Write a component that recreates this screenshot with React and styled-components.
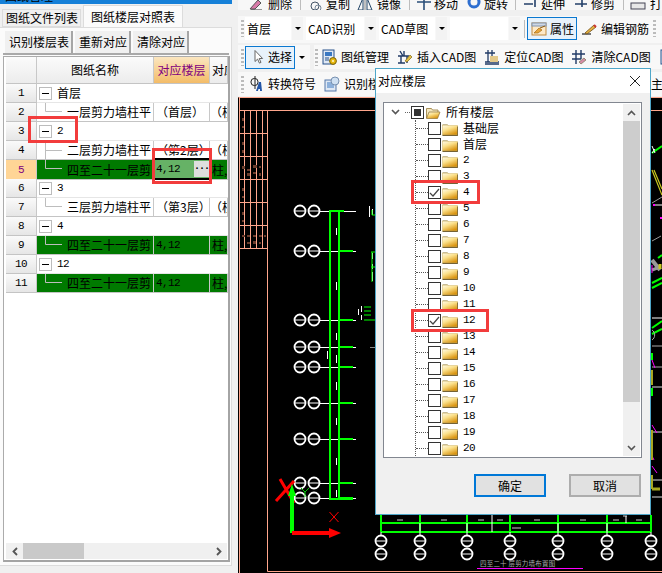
import React from 'react';
import styled, { createGlobalStyle } from 'styled-components';

const Global = createGlobalStyle`
  html, body { margin: 0; padding: 0; background: #f0f0f0; }
  * { box-sizing: border-box; }
`;

const CJK = `"Noto Sans CJK SC", "Liberation Sans", sans-serif`;
const MONO = `"Liberation Mono", monospace`;

const Page = styled.div`
  position: relative; width: 662px; height: 573px; overflow: hidden;
  display: flex; background: #f0f0f0; color: #000;
  font: 12px/16px ${CJK};
`;

/* ---------- left panel ---------- */
const LeftPanel = styled.div`
  width: 238px; flex: none; height: 573px; display: flex; flex-direction: column;
`;
const TitleStrip = styled.div`
  height: 4px; width: 232px; flex: none; background: #1580d8; overflow: hidden;
  display: flex; align-items: flex-end; padding-left: 5px; font-size: 12px;
`;
const TabBar = styled.div`
  height: 22px; flex: none; display: flex; align-items: flex-end; padding: 0 0 0 2px; gap: 2px; margin-top: 1px;
`;
const Tab = styled.div`
  height: ${p => (p.$active ? 22 : 18)}px;
  padding: 0 ${p => (p.$active ? 7 : 2)}px 0 ${p => (p.$active ? 7 : 3)}px;
  display: flex; align-items: center;
  background: ${p => (p.$active ? '#fbfbfb' : '#f0f0f0')};
  border: 1px solid #dcdcdc; border-bottom: ${p => (p.$active ? 'none' : '1px solid #dcdcdc')};
`;
const TabBody = styled.div`
  width: 232px; height: 539px; flex: none; background: #fbfbfb; border: 1px solid #dcdcdc; border-left: none;
  padding: 3px 0 0 3px; display: flex; flex-direction: column;
`;
const ButtonBar = styled.div`
  height: 24px; flex: none; display: flex; gap: 2px; border-bottom: 2px solid #a9a9a9; width: 226px; margin-bottom: 1px; padding-left: 2px;
`;
const BarButton = styled.div`
  height: 22px; padding: 0 2px 0 4px; display: flex; align-items: center; background: #f0f0f0;
  border-right: 2px solid #a6a6a6;
`;
const TableFrame = styled.div`
  width: 227px; flex: 1; min-height: 0; margin-bottom: 3px; display: flex; flex-direction: column; background: #fff;
  border: 1px solid #ababab; border-right: 2px solid #a4a4a4; border-bottom: 2px solid #a4a4a4; padding-left: 2px;
`;
const Grid = styled.div`
  flex: 1; min-height: 0; overflow: hidden;
`;
const Row = styled.div`
  display: grid; grid-template-columns: 31px 117px 56px 18px; height: ${p => p.$h || 19}px;
`;
const NumCell = styled.div`
  display: flex; align-items: center; justify-content: center;
  border-right: 1px solid #c8c8c8; border-bottom: 1px solid #c4c4c4;
  background: ${p => (p.$active ? '#ffd596' : 'linear-gradient(#fafafa, #e6e6e6)')};
  color: ${p => (p.$active ? '#800080' : '#000')};
  font: 11px/16px ${MONO}; letter-spacing: -0.6px;
`;
const HeadCell = styled.div`
  display: flex; align-items: center; justify-content: ${p => (p.$left ? 'flex-start' : 'center')};
  overflow: hidden; white-space: nowrap;
  border-right: 1px solid #c8c8c8; border-bottom: 1px solid #c4c4c4; padding-left: ${p => (p.$left ? 2 : 0)}px;
  background: ${p => (p.$accent ? 'linear-gradient(#fbe6c0, #f3bc68)' : 'linear-gradient(#fbfbfb, #ececec)')};
  color: ${p => (p.$accent ? '#800080' : '#000')};
`;
const GroupCell = styled.div`
  grid-column: 2 / 5; display: flex; align-items: center; gap: 5px; padding-left: 2px; border-bottom: 1px solid #e6e6e6; position: relative;
`;
const Expander = styled.span`
  width: 13px; height: 13px; flex: none; border: 1px solid #bcbcbc; background: #fff; display: flex; align-items: center; justify-content: center;
  &::before { content: ''; width: 7px; height: 1px; background: #000; }
`;
const Digits = styled.span`
  font: 11px/16px ${MONO}; letter-spacing: -0.6px;
`;
const Cell = styled.div`
  display: flex; align-items: center; overflow: hidden; white-space: nowrap;
  border-right: 1px solid #c8c8c8; border-bottom: 1px solid #c4c4c4;
  background: ${p => (p.$green ? '#007a00' : '#fff')};
  padding-left: ${p => p.$pad ?? 2}px;
`;
const EditCell = styled.div`
  margin-top: -2px; height: 22px; display: flex; align-items: center; justify-content: space-between; background: #66b266;
  border-top: 2px solid #000; border-bottom: 2px solid #000; padding-left: 2px; z-index: 1; position: relative; margin-right: 1px;
`;
const EllipsisBtn = styled.span`
  width: 15px; height: 16px; background: #dedede; font: bold 10px/12px ${MONO}; text-align: center; letter-spacing: -1px;
`;
const Connector = styled.svg`
  width: 30px; height: 19px; flex: none; display: block; overflow: visible;
`;
const HScroll = styled.div`
  height: 16px; flex: none; display: flex; align-items: stretch; background: #f0f0f0; width: 221px; margin-bottom: 1px;
`;
const ScrollArrow = styled.div`
  width: ${p => p.$w || 17}px; flex: none; display: flex; align-items: center; justify-content: center;
`;
const HThumb = styled.div`
  width: 61px; background: #c9c9c9;
`;
const HTrack = styled.div`
  flex: 1;
`;

/* ---------- right column ---------- */
const RightColumn = styled.div`
  width: 424px; flex: none; height: 573px; display: flex; flex-direction: column;
`;
const ClippedBar = styled.div`
  height: 10px; flex: none; overflow: hidden; background: #f7f7f7; display: flex; align-items: flex-start; padding-left: 10px; margin-bottom: 6px; white-space: nowrap;
  & > * { margin-top: -8px; }
`;
const ToolBar = styled.div`
  height: ${p => p.$h}px; flex: none; overflow: hidden; white-space: nowrap; display: flex; align-items: center; background: #f8f8f8;
  margin-bottom: ${p => p.$mb || 0}px; padding-bottom: ${p => p.$pb || 0}px;
`;
const Grip = styled.div`
  width: 3px; height: 17px; margin: 0 ${p => p.$mr ?? 1}px 0 ${p => p.$ml ?? 3}px; flex: none;
  background: repeating-linear-gradient(#bbb 0 2px, transparent 2px 4px);
`;
const Combo = styled.div`
  width: ${p => p.$w}px; height: 23px; flex: none; background: #fff; padding-left: 2px; display: flex; align-items: center;
`;
const ComboArrow = styled.div`
  width: 11px; height: 23px; margin-left: 1px; margin-right: 3px; flex: none; background: #f3f3f3; display: flex; align-items: center; justify-content: center;
  &::before { content: ''; border: 3px solid transparent; border-top: 3px solid #000; border-bottom: none; }
`;
const Sep = styled.div`
  width: 1px; height: ${p => p.$h || 18}px; background: #bdbdbd; flex: none; margin: 0 ${p => p.$mr ?? 2}px 0 ${p => p.$ml ?? 1}px;
`;
const ToolItem = styled.div`
  display: flex; align-items: center; flex: none; gap: ${p => p.$gap ?? 4}px; margin-right: ${p => p.$mr ?? 8}px; height: 23px;
  ${p => p.$sel && `border: 1px solid #0a78d0; background: #e8f2fb; padding: 0 2px 0 ${p.$pl ?? 3}px;`}
`;
const Icon = styled.svg`
  width: 16px; height: 16px; flex: none; display: block;
`;
const BareArrow = styled.div`
  width: 6px; margin: 0 5px 0 4px; flex: none; display: flex; align-items: center;
  &::before { content: ''; border: 3px solid transparent; border-top: 3px solid #000; border-bottom: none; }
`;
const GapBreak = styled.div`
  width: 4px; height: 100%; background: #f0f0f0; flex: none; margin-right: 1px;
`;
const Trailing = styled.span`
  margin-left: auto; margin-right: -13px; flex: none;
`;
const Canvas = styled.svg`
  display: block; width: 424px; height: 476px; background: #000; flex: none;
`;

/* ---------- dialog ---------- */
const Dialog = styled.div`
  position: absolute; left: 375px; top: 68px; width: 276px; height: 447px; background: #f0f0f0; border: 1px solid #4fa6c8; display: flex; flex-direction: column;
`;
const DialogTitle = styled.div`
  height: 24px; flex: none; background: #fff; display: flex; align-items: center; justify-content: space-between; padding: 0 9px 0 2px;
`;
const TreeBox = styled.div`
  width: 259px; height: 356px; margin: 9px 0 0 7px; flex: none; background: #fff; border: 1px solid #828790; display: flex; overflow: hidden;
`;
const TreeList = styled.div`
  flex: 1; padding-top: 1px; overflow: hidden;
`;
const RootRow = styled.div`
  height: 16px; display: flex; align-items: center; padding-left: 7px;
`;
const RootDots = styled.span`
  width: 5px; border-top: 1px dotted #666; margin: 0 1px 0 5px; flex: none;
`;
const Children = styled.div`
  margin-left: 31px; border-left: 1px dotted #555; height: 336px; overflow: hidden;
`;
const TreeRow = styled.div`
  height: 16px; display: flex; align-items: center;
  &::before { content: ''; width: 12px; border-top: 1px dotted #555; flex: none; }
`;
const CheckBox = styled.span`
  width: 13px; height: 13px; flex: none; background: #fff; border: 1px solid #333; display: flex; align-items: center; justify-content: center;
`;
const RootMark = styled.span`
  width: 7px; height: 7px; background: #333;
`;
const Folder = styled.svg`
  width: 16px; height: 15px; flex: none; margin: 0 5px 0 1px; display: block;
`;
const VScroll = styled.div`
  width: 17px; margin: 1px 1px 0 0; height: 352px; flex: none; background: #f0f0f0; display: flex; flex-direction: column;
`;
const VThumb = styled.div`
  height: 281px; background: #cdcdcd; flex: none;
`;
const VArrow = styled.div`
  height: 17px; flex: none; display: flex; align-items: center; justify-content: center;
`;
const DialogFooter = styled.div`
  display: flex; justify-content: flex-end; gap: 23px; padding: 16px 9px 0 0;
`;
const DialogButton = styled.div`
  width: 72px; height: 23px; display: flex; align-items: center; justify-content: center; background: #e1e1e1;
  border: 2px solid ${p => (p.$primary ? '#0078d7' : '#adadad')};
`;

/* ---------- red annotation boxes ---------- */
const Mark = styled.div`
  position: absolute; left: ${p => p.$x}px; top: ${p => p.$y}px; width: ${p => p.$w}px; height: ${p => p.$h}px;
  border: 3px solid #f23c3c; pointer-events: none; z-index: 5;
`;

/* ---------- drawings ---------- */
const ChevronDown = ({ c = '#555' }) => (
  <svg width="9" height="6" viewBox="0 0 9 6"><path d="M1 1l3.5 3.5L8 1" fill="none" stroke={c} strokeWidth="1.6" /></svg>
);
const ChevronUp = () => (
  <svg width="9" height="6" viewBox="0 0 9 6"><path d="M1 5l3.5-3.5L8 5" fill="none" stroke="#555" strokeWidth="1.6" /></svg>
);
const ChevronSide = ({ right }) => (
  <svg width="6" height="9" viewBox="0 0 6 9"><path d={right ? 'M1 1l3.5 3.5L1 8' : 'M5 1L1.5 4.5 5 8'} fill="none" stroke="#555" strokeWidth="1.8" /></svg>
);
const FolderIcon = ({ open }) => (
  <Folder viewBox="0 0 16 15">
    <defs>
      <linearGradient id="fg" x1="0" y1="0" x2=".6" y2="1">
        <stop offset="0" stopColor="#fffbe8" /><stop offset="0.45" stopColor="#fbe08a" /><stop offset="1" stopColor="#d9930f" />
      </linearGradient>
    </defs>
    {open ? (
      <>
        <path d="M1.5 13V3.5h5l1 1.500H13v2" fill="#f4e8c0" stroke="#a89058" />
        <path d="M1.500 13.500L4 7h11l-2.500 6.500z" fill="url(#fg)" stroke="#8c7030" strokeWidth=".7" />
      </>
    ) : (
      <>
        <path d="M.5 3.500h5l1 1.500" fill="none" stroke="#c8bc94" />
        <rect x=".5" y="4.500" width="15" height="9.500" fill="url(#fg)" stroke="#d8c078" strokeWidth=".6" />
        <path d="M.5 14.400h15.300V5.500" fill="none" stroke="#54410f" strokeWidth=".9" />
      </>
    )}
  </Folder>
);

const elbow = <path d="M8.500 -3V8.500H25" fill="none" stroke="#bdbdbd" />;
const tee = <path d="M8.500 -3V19M8.500 9.500H25" fill="none" stroke="#bdbdbd" />;

const Ic = {
  del: <><path d="M2 13L10 4l3 3-6 6z" fill="#d87aa8" stroke="#555" /><path d="M3 14h11" stroke="#333" /></>,
  copy: <><circle cx="9" cy="10" r="4" fill="none" stroke="#456" /><circle cx="12" cy="12" r="3" fill="none" stroke="#789" /></>,
  mirror: <><path d="M1 14L6 2v12zM15 14L10 2v12z" fill="none" stroke="#246" /><path d="M8 1v14" stroke="#888" /></>,
  move: <path d="M8 1v14M1 6h14" stroke="#2a4f7a" strokeWidth="1.6" fill="none" />,
  rot: <circle cx="8" cy="6" r="5" fill="none" stroke="#2f6fd0" strokeWidth="3" />,
  ext: <path d="M1 8h9M12 1v10" stroke="#24406a" strokeWidth="1.6" fill="none" />,
  trim: <path d="M2 8h12M9 1v10" stroke="#24406a" strokeWidth="1.6" fill="none" />,
  print: <><rect x="1" y="7" width="14" height="6" fill="#e8e8e8" stroke="#445" /></>,
  prop: <>
    <rect x="1" y="2" width="14" height="12" fill="#fde9c8" stroke="#c08a40" />
    <rect x="1" y="2" width="14" height="3" fill="#cfd8e4" stroke="#8094b0" />
    <path d="M3 12l5-5 3 2-4 3z" fill="#e9a63a" stroke="#a36b14" strokeWidth=".7" />
    <path d="M9 7l5-2" stroke="#8a5a10" />
  </>,
  rebar: <><path d="M1 13h9" stroke="#222" strokeWidth="1.2" /><path d="M4 12l9-8 2 2-9 7z" fill="#e6b341" stroke="#704d18" strokeWidth=".8" /><path d="M13 4l2 2" stroke="#c33" strokeWidth="2" /></>,
  manage: <><rect x="2" y="1" width="11" height="14" fill="#dfe8f4" stroke="#27508a" /><rect x="4" y="3" width="7" height="4" fill="#3a78c2" /><path d="M4 9h4M4 11h4" stroke="#27508a" /><circle cx="12" cy="12" r="3.400" fill="#e8b90f" stroke="#7b6208" /><circle cx="12" cy="12" r="1" fill="#fff8d0" /></>,
  insert: <><path d="M3 2l3 5M7 2v5M1 7h11M4 7v7M10 7v7M1 14h7" stroke="#203a66" strokeWidth="1.4" fill="none" /><path d="M8 12l5-6 2 2-5 5z" fill="#e3c045" stroke="#7c6519" strokeWidth=".7" /></>,
  locate: <><path d="M1 13h14M1 15h14M4 1v12M8 1v12M1 4h10" stroke="#203a66" strokeWidth="1.3" fill="none" /><rect x="6" y="7" width="8" height="6" fill="#e3c98a" /></>,
  clear: <><path d="M5 1v14M10 1v9M1 5h13M1 10h9" stroke="#203a66" strokeWidth="1.4" fill="none" /><path d="M8 13l5-4 2 2-5 4z" fill="#d78ca8" stroke="#775" strokeWidth=".7" /></>,
  symbol: <><circle cx="5.500" cy="6" r="3.600" fill="none" stroke="#222" /><path d="M6 0v13" stroke="#222" /><path d="M7 15l3-9h2l1 9h-2v-2h-1.500l-.6 2z" fill="#2356a8" /></>,
  detect: <><rect x="1" y="4" width="11" height="11" fill="#dfe8f4" stroke="#5577a8" /><path d="M3 7h7M3 9h7M3 11h7" stroke="#3a78c2" /><circle cx="11" cy="5" r="4" fill="#cfe0f2" stroke="#7790b0" /></>,
  cursor: <path d="M5 1.500v11l2.600-2.400 1.800 4 1.600-.7-1.800-3.900h3.400z" fill="#fff" stroke="#666" />,
};
const Glyph = ({ k }) => <Icon viewBox="0 0 16 16">{Ic[k]}</Icon>;

const Axis = ({ x, y }) => (
  <>
    <circle cx={x} cy={y} r="5.500" fill="none" stroke="#fff" strokeWidth="1.800" />
    <path d={`M${x - 6} ${y}h12`} stroke="#fff" />
  </>
);
const ys = [211, 251, 320, 347, 367, 403, 439, 483, 498];
const bx = [381, 420, 467, 510, 558, 607, 651];

const CadDrawing = () => (
  <Canvas viewBox="238 97 424 476">
    <g stroke="#ffa68c" fill="none">
      <path d="M238.500 97.500H662M239.500 97V573M239.500 110.500H662M267.500 110V571.500H662" />
      <path d="M244.500 110v138M250.500 110v138M256.500 110v138M262.500 110v138" />
      <path d="M240 133.500h27M240 156.500h27M240 179.500h27M240 202.500h27M240 225.500h27M240 248.500h27" />
    </g>
    <g fill="#6b3c2c">
      <rect x="242" y="118" width="2" height="3" /><rect x="242" y="126" width="2" height="2" />
      <rect x="242" y="142" width="2" height="3" /><rect x="242" y="150" width="2" height="3" />
      <rect x="242" y="166" width="3" height="3" /><rect x="247" y="169" width="3" height="2" /><rect x="253" y="165" width="4" height="3" /><rect x="259" y="166" width="2" height="2" /><rect x="247" y="173" width="3" height="3" /><rect x="253" y="172" width="3" height="2" /><rect x="259" y="173" width="2" height="3" />
      <rect x="242" y="188" width="2" height="3" /><rect x="242" y="196" width="2" height="2" />
      <rect x="242" y="212" width="2" height="3" /><rect x="242" y="220" width="2" height="2" />
      <rect x="242" y="235" width="3" height="2" /><rect x="247" y="235" width="3" height="2" /><rect x="253" y="235" width="3" height="2" /><rect x="259" y="235" width="3" height="2" /><rect x="264" y="235" width="2" height="2" /><rect x="247" y="242" width="3" height="2" /><rect x="253" y="241" width="3" height="3" /><rect x="259" y="242" width="2" height="2" />
    </g>
    {ys.map(y => (
      <g key={y}>
        <Axis x={300} y={y} />
        <Axis x={314} y={y} />
        <path d={`M320 ${y + .5}h36`} stroke="#fff" />
        <path d={`M${y === 211 ? 330 : 339} ${y}h14`} stroke="#0f0" strokeWidth="2" />
      </g>
    ))}
    <path d="M330 210V500M339 210V500" stroke="#0f0" strokeWidth="2" fill="none" />
    <path d="M330 499h23" stroke="#0f0" strokeWidth="2" />
    <path d="M336.500 228v7M336.500 282v8M336.500 333v7M336.500 355v8M336.500 382v8M336.500 418v7M336.500 458v7M336.500 490v7M327.500 351v8" stroke="#fff" strokeWidth="1" />
    <g stroke="#fff" fill="none">
      <path d="M369.500 206v11M372.500 209v6M372.500 253v6M372.500 264v5M372.500 272v5M372.500 276v5M358.500 309v6M361.500 306v6M361.500 315v5" />
    </g>
    <path d="M370 347.500h5" stroke="#888" />
    <g stroke="#0f0" fill="none">
      <path d="M372 215h4M372 210v5M371 252h6M372 252v30M371 267h6M364 307h7M364 311h7M364 315h7M364 320h11" />
    </g>
    {/* origin */}
    <path d="M280 479l14 24M294 481l-18 20" stroke="#f00" strokeWidth="3" />
    <path d="M292 533V490" stroke="#0f0" strokeWidth="4" />
    <path d="M288 496l4-12 4 12z" fill="#0f0" />
    <path d="M292 533h37" stroke="#f00" strokeWidth="4" />
    <path d="M329 528l12 5-12 5z" fill="#f00" />
    <path d="M329.500 512l9 10M338.500 512l-9 10" stroke="#f00" />
    <path d="M301 488l4 4 4-4M305 492v5" stroke="#0c0" fill="none" />
    {/* right strip */}
    <path d="M652 153l10-7" stroke="#0f0" strokeWidth="2" />
    <path d="M652 146l3 7M652 153l3-4" stroke="#fff" />
    <path d="M652 170l10 25M654 170l8 19" stroke="#c8c820" strokeWidth="1.200" />
    <path d="M652 203l10-6M652 241l9-5" stroke="#999" />
    <path d="M653 205h9" stroke="#fff" /><rect x="653" y="204" width="2" height="2" fill="#f0f" /><rect x="660" y="217" width="2" height="2" fill="#f0f" />
    <path d="M652 260l8 10" stroke="#999" strokeWidth="4" /><path d="M652 270l8 -3" stroke="#999" strokeWidth="3" /><path d="M660 264v5" stroke="#c8c820" strokeWidth="3" />
    <path d="M652 265v8" stroke="#f0f" /><path d="M658 258l4-3M652 283l10-5M652 288l10-5" stroke="#0f0" strokeWidth="2" />
    <path d="M652 318h10" stroke="#fff" /><path d="M652 328l10-7M652 334l10-5" stroke="#0f0" strokeWidth="2" />
    <path d="M652 330a6 6 0 0 1 0 10M652 346h10M652 367h10" stroke="#aaa" fill="none" />
    <path d="M652 353v7M652 388v8" stroke="#0f0" strokeWidth="2" />
    <path d="M652 432h10M652 387h10M652 480h10M652 497h10" stroke="#ddd" />
    <path d="M652 360l3 8M652 425l5 8M652 466l5 7M652 456l2 4" stroke="#f0f" />
    <path d="M652 370v15M652 430v30M652 475v14" stroke="#a8a820" strokeWidth="2" />
    <path d="M652 489h8" stroke="#a8a820" strokeWidth="3" />
    {/* bottom of the plan */}
    <path d="M381 523H651M381 532H651" stroke="#0f0" strokeWidth="2" />
    {bx.map(x => (
      <g key={x}>
        <path d={`M${x} 515v17`} stroke="#0f0" strokeWidth="2" />
        <path d={`M${x} 532v3`} stroke="#fff" />
        <Axis x={x} y={541} />
        <Axis x={x} y={554} />
      </g>
    ))}
    <path d="M397 520h6M441 520h6M478 520h6M497 520h6M534 520h6M580 520h6M613 520h6M636 520h6M512 528h9M623 516h4" stroke="#ccc" />
    <path d="M492 515v8M626 516v7M492 523v9M558 523v9M607 523v9M420 523v9M467 523v9" stroke="#fff" />
    <text x="480" y="566" fontFamily={CJK} fontSize="6.500" fill="#aaa" letterSpacing=".2">四至二十 层剪力墙布置图</text>
    <path d="M477 568.500H583" stroke="#f0f" />
  </Canvas>
);

const App = () => {
  const lower = ['基础层', '首层', '2', '3', '4', '5', '6', '7', '8', '9', '10', '11', '12', '13', '14', '15', '16', '17', '18', '19', '20'];
  return (
    <Page>
      <Global />
      <LeftPanel>
        <TitleStrip>图纸管理</TitleStrip>
        <TabBar>
          <Tab>图纸文件列表</Tab>
          <Tab $active>图纸楼层对照表</Tab>
        </TabBar>
        <TabBody>
          <ButtonBar>
            <BarButton>识别楼层表</BarButton>
            <BarButton>重新对应</BarButton>
            <BarButton>清除对应</BarButton>
          </ButtonBar>
          <TableFrame>
            <Grid>
              <Row $h={27}>
                <HeadCell />
                <HeadCell>图纸名称</HeadCell>
                <HeadCell $accent>对应楼层</HeadCell>
                <HeadCell $left>对应</HeadCell>
              </Row>
              <Row>
                <NumCell>1</NumCell>
                <GroupCell><Expander />首层</GroupCell>
              </Row>
              <Row>
                <NumCell>2</NumCell>
                <Cell $pad={0}><Connector>{elbow}</Connector>一层剪力墙柱平</Cell>
                <Cell>（首层）</Cell>
                <Cell $pad={0}>（柱</Cell>
              </Row>
              <Row>
                <NumCell>3</NumCell>
                <GroupCell><Expander /><Digits>2</Digits></GroupCell>
              </Row>
              <Row>
                <NumCell>4</NumCell>
                <Cell $pad={0}><Connector>{tee}</Connector>二层剪力墙柱平</Cell>
                <Cell>（第2层）</Cell>
                <Cell $pad={0}>（柱</Cell>
              </Row>
              <Row>
                <NumCell $active>5</NumCell>
                <Cell $green $pad={0}><Connector>{elbow}</Connector>四至二十一层剪</Cell>
                <EditCell><Digits>4,12</Digits><EllipsisBtn>...</EllipsisBtn></EditCell>
                <Cell $green>柱,墙</Cell>
              </Row>
              <Row>
                <NumCell>6</NumCell>
                <GroupCell><Expander /><Digits>3</Digits></GroupCell>
              </Row>
              <Row>
                <NumCell>7</NumCell>
                <Cell $pad={0}><Connector>{elbow}</Connector>三层剪力墙柱平</Cell>
                <Cell>（第3层）</Cell>
                <Cell $pad={0}>（柱</Cell>
              </Row>
              <Row>
                <NumCell>8</NumCell>
                <GroupCell><Expander /><Digits>4</Digits></GroupCell>
              </Row>
              <Row>
                <NumCell>9</NumCell>
                <Cell $green $pad={0}><Connector>{elbow}</Connector>四至二十一层剪</Cell>
                <Cell $green><Digits>4,12</Digits></Cell>
                <Cell $green>柱,墙</Cell>
              </Row>
              <Row>
                <NumCell>10</NumCell>
                <GroupCell><Expander /><Digits>12</Digits></GroupCell>
              </Row>
              <Row>
                <NumCell>11</NumCell>
                <Cell $green $pad={0}><Connector>{elbow}</Connector>四至二十一层剪</Cell>
                <Cell $green><Digits>4,12</Digits></Cell>
                <Cell $green>柱,墙</Cell>
              </Row>
            </Grid>
            <HScroll>
              <ScrollArrow><ChevronSide /></ScrollArrow>
              <HThumb />
              <HTrack />
              <ScrollArrow><ChevronSide right /></ScrollArrow>
            </HScroll>
          </TableFrame>
        </TabBody>
      </LeftPanel>

      <RightColumn>
        <ClippedBar>
          <ToolItem $mr={8}><Glyph k="del" />删除</ToolItem>
          <Sep $ml={0} $mr={5} />
          <ToolItem $mr={7}><Glyph k="copy" />复制</ToolItem>
          <ToolItem $mr={8}><Glyph k="mirror" />镜像</ToolItem>
          <Sep $ml={0} $mr={6} />
          <ToolItem $mr={8} $gap={2}><Glyph k="move" />移动</ToolItem>
          <ToolItem $mr={7} $gap={2}><Glyph k="rot" />旋转</ToolItem>
          <Sep $ml={0} $mr={7} />
          <ToolItem $mr={8} $gap={2}><Glyph k="ext" />延伸</ToolItem>
          <ToolItem $mr={8} $gap={2}><Glyph k="trim" />修剪</ToolItem>
          <Sep $ml={0} $mr={6} />
          <ToolItem><Glyph k="print" />打印</ToolItem>
        </ClippedBar>
        <ToolBar $h={27} $mb={2} $pb={2}>
          <Grip />
          <Combo $w={46}>首层</Combo><ComboArrow />
          <Combo $w={58}>CAD识别</Combo><ComboArrow />
          <Combo $w={56}>CAD草图</Combo><ComboArrow />
          <Combo $w={58} /><ComboArrow />
          <Sep />
          <ToolItem $sel $mr={4} $gap={3}><Glyph k="prop" />属性</ToolItem>
          <ToolItem $mr={1} $gap={4}><Glyph k="rebar" />编辑钢筋</ToolItem>
          <Grip />
        </ToolBar>
        <ToolBar $h={24} $mb={3}>
          <Grip />
          <ToolItem $sel $mr={0} $gap={2} $pl={4}><Glyph k="cursor" />选择</ToolItem>
          <BareArrow />
          <GapBreak />
          <Grip $ml={0} $mr={3} />
          <ToolItem $gap={4}><Glyph k="manage" />图纸管理</ToolItem>
          <ToolItem $gap={4}><Glyph k="insert" />插入CAD图</ToolItem>
          <ToolItem $gap={4}><Glyph k="locate" />定位CAD图</ToolItem>
          <ToolItem $gap={4}><Glyph k="clear" />清除CAD图</ToolItem>
          <Glyph k="manage" />
        </ToolBar>
        <ToolBar $h={24} $mb={1}>
          <Grip $mr={5} />
          <ToolItem $gap={3}><Glyph k="symbol" />转换符号</ToolItem>
          <ToolItem $gap={4}><Glyph k="detect" />识别楼层表</ToolItem>
          <Trailing>主图</Trailing>
        </ToolBar>
        <CadDrawing />
      </RightColumn>

      <Dialog>
        <DialogTitle>
          对应楼层
          <svg width="12" height="12" viewBox="0 0 12 12"><path d="M1 1l10 10M11 1L1 11" stroke="#222" /></svg>
        </DialogTitle>
        <TreeBox>
          <TreeList>
            <RootRow>
              <ChevronDown />
              <RootDots />
              <CheckBox><RootMark /></CheckBox>
              <FolderIcon open />
              所有楼层
            </RootRow>
            <Children>
              {lower.map(n => (
                <TreeRow key={n}>
                  <CheckBox>
                    {(n === '4' || n === '12') && (
                      <svg width="11" height="11" viewBox="0 0 11 11"><path d="M1 6l3 3 6-7" fill="none" stroke="#444" strokeWidth="1.200" /></svg>
                    )}
                  </CheckBox>
                  <FolderIcon />
                  {/^\d+$/.test(n) ? <Digits>{n}</Digits> : n}
                </TreeRow>
              ))}
            </Children>
          </TreeList>
          <VScroll>
            <VArrow><ChevronUp /></VArrow>
            <VThumb />
            <HTrack />
            <VArrow><ChevronDown /></VArrow>
          </VScroll>
        </TreeBox>
        <DialogFooter>
          <DialogButton $primary>确定</DialogButton>
          <DialogButton>取消</DialogButton>
        </DialogFooter>
      </Dialog>

      <Mark $x={28} $y={116} $w={50} $h={27} />
      <Mark $x={152} $y={148} $w={60} $h={36} />
      <Mark $x={411} $y={180} $w={69} $h={24} />
      <Mark $x={411} $y={309} $w={78} $h={23} />
    </Page>
  );
};

export default App;
